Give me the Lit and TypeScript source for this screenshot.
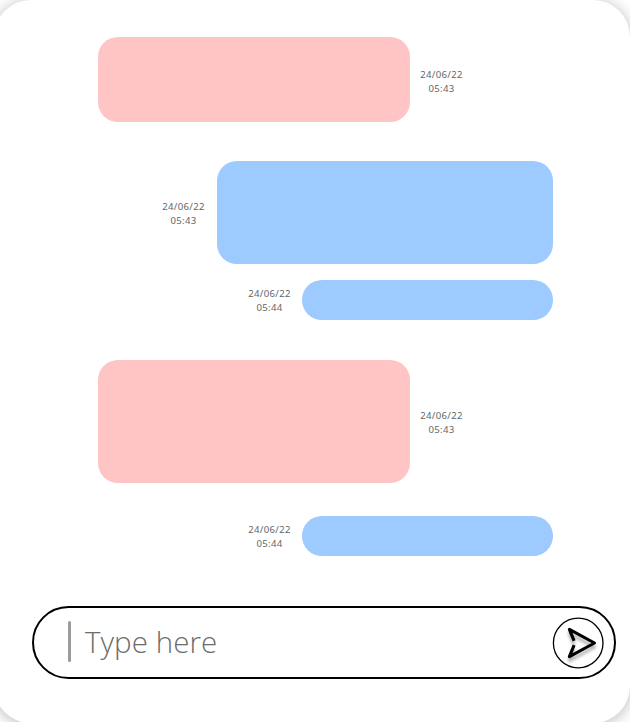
import { LitElement, html, css, svg } from "lit";
import { customElement, property } from "lit/decorators.js";
import { styleMap } from "lit/directives/style-map.js";

interface Message {
  own: boolean;
  width: number;
  height: number;
  gap: number;
  stampGap: number;
  stampShift: number;
  date: string;
  time: string;
}

const messages: Message[] = [
  { own: false, width: 312, height: 85, gap: 0, stampGap: 10, stampShift: 5, date: "24/06/22", time: "05:43" },
  { own: true, width: 336, height: 103, gap: 39, stampGap: 12, stampShift: 3, date: "24/06/22", time: "05:43" },
  { own: true, width: 251, height: 40, gap: 16, stampGap: 11, stampShift: 2, date: "24/06/22", time: "05:44" },
  { own: false, width: 312, height: 123, gap: 40, stampGap: 10, stampShift: 3, date: "24/06/22", time: "05:43" },
  { own: true, width: 251, height: 40, gap: 33, stampGap: 11, stampShift: 2, date: "24/06/22", time: "05:44" },
];

@customElement("chat-message")
class ChatMessage extends LitElement {
  @property({ attribute: false }) message!: Message;

  static styles = css`
    :host { display: block; }
    .row { display: flex; align-items: center; }
    .row.own { flex-direction: row-reverse; }
    .bubble { border-radius: 20px; background: #ffc4c4; flex: none; }
    .own .bubble { background: #9dcaff; }
    .stamp {
      width: 43px;
      text-align: center;
      white-space: nowrap;
      font: 9.6px/14px "Noto Sans", sans-serif;
      letter-spacing: 0.3px;
      color: #666;
    }
  `;

  render() {
    const m = this.message;
    return html`<div class="row ${m.own ? "own" : ""}" style=${styleMap({ gap: `${m.stampGap}px` })}>
      <div class="bubble" style=${styleMap({ width: `${m.width}px`, height: `${m.height}px` })}></div>
      <div class="stamp" style=${styleMap({ paddingTop: `${m.stampShift}px` })}><div>${m.date}</div><div>${m.time}</div></div>
    </div>`;
  }
}

@customElement("chat-composer")
class ChatComposer extends LitElement {
  static styles = css`
    :host { display: block; }
    .field {
      box-sizing: border-box;
      display: flex;
      align-items: center;
      width: 584px;
      height: 73px;
      padding: 0 10px 0 34px;
      border: 2px solid #000;
      border-radius: 37px;
    }
    .caret { width: 3px; height: 41px; margin-bottom: 3px; border-radius: 1.5px; background: #9b9b9b; }
    .hint {
      flex: 1;
      margin-left: 14px;
      margin-bottom: 1px;
      font: 300 29.5px/40px "Open Sans", sans-serif;
      letter-spacing: 0.05px;
      color: #6c6c6c;
    }
    .send { display: block; width: 52px; height: 52px; }
    .ring { fill: none; stroke: #000; stroke-width: 1.3; }
    .arrow { fill: none; stroke: #000; stroke-width: 3.1; stroke-linejoin: round; filter: drop-shadow(0 4px 1.5px rgba(0, 0, 0, 0.3)); }
  `;

  render() {
    return html`<div class="field">
      <div class="caret"></div>
      <div class="hint">Type here</div>
      <svg class="send" viewBox="0 0 52 52">
        ${svg`<circle class="ring" cx="26.2" cy="26" r="24.8" />
        <path class="arrow" d="M22.1 23.8 L17.4 12.4 L42.5 26 L17.4 39.6 L22.1 28.2" />`}
      </svg>
    </div>`;
  }
}

@customElement("app-root")
class AppRoot extends LitElement {
  static styles = css`
    :host { display: block; width: 630px; height: 722px; overflow: hidden; background: #fff; }
    .card {
      box-sizing: border-box;
      width: 636px;
      height: 723px;
      margin-left: -6px;
      padding: 37px 0 0 38px;
      border-radius: 37px;
      background: #fff;
      box-shadow: 0 2px 14px 2px rgba(0, 0, 0, 0.22);
    }
    .thread { width: 455px; margin-left: 66px; height: 569px; }
  `;

  render() {
    return html`<main class="card">
      <section class="thread">
        ${messages.map((m) => html`<chat-message style=${styleMap({ paddingTop: `${m.gap}px` })} .message=${m}></chat-message>`)}
      </section>
      <chat-composer></chat-composer>
    </main>`;
  }
}
